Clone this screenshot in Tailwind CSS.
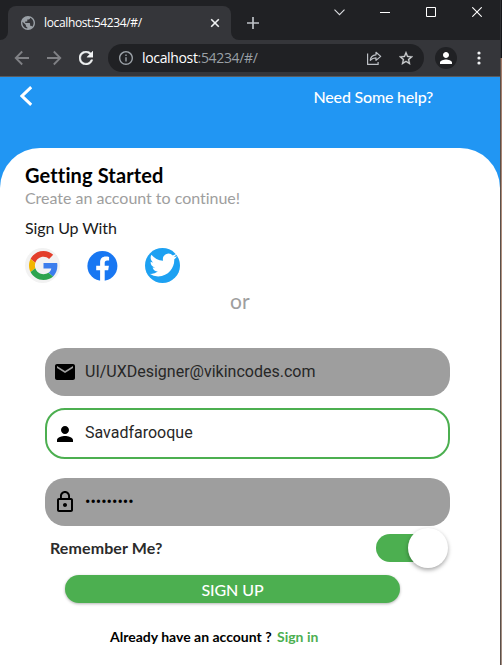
<!DOCTYPE html>
<html lang="en">
<head>
<meta charset="utf-8">
<title>Getting Started</title>
<script src="https://cdn.jsdelivr.net/npm/@tailwindcss/browser@4"></script>
</head>
<body class="w-[502px] h-[665px] overflow-hidden flex bg-[#202124] font-['Lato',sans-serif]">
<div class="w-[500px] h-[665px] shrink-0 flex flex-col">
  <!-- tab strip -->
  <div class="h-10 shrink-0 flex bg-[#202124] font-['Open_Sans',sans-serif]">
    <div class="w-2 flex items-end bg-[#35363a]"><div class="w-2 h-10 bg-[#202124] rounded-br-lg"></div></div>
    <div class="w-[223px] bg-[#202124] pt-1.5">
      <div class="h-[34px] rounded-t-lg bg-[#35363a] flex items-center pl-[13px] pr-[11px]">
        <svg class="w-[14px] h-[14px] shrink-0" viewBox="2 2 20 20" fill="#9aa0a6"><path d="M12 2C6.480 2 2 6.480 2 12s4.480 10 10 10 10-4.480 10-10S17.520 2 12 2zm-1 17.930c-3.950-.490-7-3.850-7-7.930 0-.620.080-1.210.210-1.790L9 15v1c0 1.100.9 2 2 2v1.930zm6.900-2.540c-.260-.810-1-1.390-1.900-1.390h-1v-3c0-.550-.450-1-1-1H8v-2h2c.550 0 1-.450 1-1V7h2c1.100 0 2-.9 2-2v-.410c2.930 1.190 5 4.060 5 7.410 0 2.080-.8 3.970-2.100 5.390z"/></svg>
        <span class="ml-[9px] text-[12px] leading-4 tracking-[-0.36px] text-white whitespace-nowrap">localhost:54234/#/</span>
        <svg class="w-[10px] h-[10px] ml-auto shrink-0" viewBox="0 0 10 10" stroke="#f1f3f4" stroke-width="1.600"><path d="M1.200 1.200l7.600 7.600M8.800 1.200l-7.600 7.600"/></svg>
      </div>
    </div>
    <div class="w-2 bg-[#35363a]"><div class="w-2 h-10 bg-[#202124] rounded-bl-lg"></div></div>
    <svg class="w-3 h-3 ml-2 mt-[17px]" viewBox="0 0 12 12" stroke="#bdc1c6" stroke-width="1.700"><path d="M6 0v12M0 6h12"/></svg>
    <svg class="w-[11px] h-[7px] ml-[75px] mt-[9px]" viewBox="0 0 11 7" stroke="#dadce0" stroke-width="1.100" fill="none"><path d="M.5.700l5 5 5-5"/></svg>
    <svg class="w-[10px] h-[10px] ml-[35px] mt-[7px]" viewBox="0 0 10 10"><path d="M0 5h10v1H0z" fill="#fff"/></svg>
    <svg class="w-[10px] h-[10px] ml-9 mt-[7px]" viewBox="0 0 10 10" fill="none" stroke="#fff"><path d="M.5.500h9v9h-9z"/></svg>
    <svg class="w-[10px] h-[10px] ml-9 mt-[7px]" viewBox="0 0 10 10" stroke="#fff" stroke-width="1.100"><path d="M.3.300l9.400 9.400M9.700.300L.3 9.700"/></svg>
  </div>
  <!-- toolbar -->
  <div class="h-[37px] shrink-0 flex bg-[#35363a] border-b border-[#5b5c5f] pt-1 pl-[14px] font-['Open_Sans',sans-serif]">
    <svg class="w-4 h-4 mt-1.5" viewBox="0 0 16 16" fill="none" stroke="#808185" stroke-width="1.800"><path d="M15 8H2M8.200 1.500L1.700 8l6.500 6.500"/></svg>
    <svg class="w-4 h-4 ml-4 mt-1.5" viewBox="0 0 16 16" fill="none" stroke="#808185" stroke-width="1.800"><path d="M1 8h13M7.800 1.500L14.300 8l-6.500 6.500"/></svg>
    <svg class="w-[14px] h-[14px] ml-[17px] mt-[7px]" viewBox="4 4 16 16" fill="#f1f3f4" stroke="#f1f3f4" stroke-width=".5"><path d="M17.650 6.350C16.200 4.900 14.210 4 12 4c-4.420 0-7.990 3.580-7.990 8s3.570 8 7.990 8c3.730 0 6.840-2.550 7.730-6h-2.080c-.820 2.330-3.040 4-5.650 4-3.310 0-6-2.690-6-6s2.690-6 6-6c1.660 0 3.140.690 4.220 1.780L13 11h7V4l-2.350 2.350z"/></svg>
    <div class="w-[316px] h-7 ml-[15px] rounded-full bg-[#202124] flex items-center pl-[11px] pr-[11px]">
      <svg class="w-[14px] h-[14px] shrink-0" viewBox="2 2 20 20" fill="#9aa0a6"><path d="M11 7h2v2h-2zm0 4h2v6h-2zm1-9C6.480 2 2 6.480 2 12s4.480 10 10 10 10-4.480 10-10S17.520 2 12 2zm0 18c-4.410 0-8-3.590-8-8s3.590-8 8-8 8 3.590 8 8-3.590 8-8 8z"/></svg>
      <span class="ml-[9px] text-[14px] leading-5 tracking-[-0.340px] text-[#9aa0a6] whitespace-nowrap"><span class="text-white">localhost</span>:54234/#/</span>
      <svg class="w-4 h-[14px] ml-auto shrink-0" viewBox="0 0 16 14" fill="none" stroke="#bdc1c6" stroke-width="1.200"><path d="M1.600 2.500v10.900h10.500v-2.400M4.300 9.300c.3-3.600 2.300-5.300 5.700-5.500V1.300l4.700 4.100L10 9.400V6.800c-2.500 0-4.200.7-5.700 2.500z" stroke-linejoin="round"/></svg>
      <svg class="w-[14px] h-[14px] ml-[17px] shrink-0" viewBox="2 2 20 19" fill="#d0d2d5" stroke="#d0d2d5" stroke-width=".4"><path d="M22 9.240l-7.190-.620L12 2 9.190 8.630 2 9.240l5.460 4.730L5.820 21 12 17.270 18.180 21l-1.630-7.030L22 9.240zM12 15.400l-3.760 2.270 1-4.280-3.320-2.880 4.380-.380L12 6.100l1.710 4.040 4.380.380-3.320 2.880 1 4.280L12 15.400z"/></svg>
    </div>
    <div class="w-[22px] h-[22px] ml-[11px] mt-[3px] rounded-full bg-[#202124] flex items-center justify-center">
      <svg class="w-3 h-3" viewBox="4 4 16 16" fill="#fff"><path d="M12 12c2.210 0 4-1.790 4-4s-1.790-4-4-4-4 1.790-4 4 1.790 4 4 4zm0 2c-2.670 0-8 1.340-8 4v2h16v-2c0-2.660-5.330-4-8-4z"/></svg>
    </div>
    <svg class="w-1 h-[14px] ml-[19.500px] mt-[7px]" viewBox="0 0 4 14" fill="#f1f3f4"><circle cx="2" cy="2" r="1.600"/><circle cx="2" cy="7" r="1.600"/><circle cx="2" cy="12" r="1.600"/></svg>
  </div>
  <!-- app -->
  <div class="flex-1 flex flex-col bg-[#2196f3]">
    <div class="h-[71px] shrink-0 flex justify-between pl-5 pr-[67px]">
      <svg class="w-3 h-5 mt-[9px]" viewBox="0 0 12 20" fill="none" stroke="#fff" stroke-width="3"><path d="M11.200 1.200L2 10l9.200 8.800"/></svg>
      <span class="mt-[10px] text-[16px] leading-5 tracking-[-0.200px] text-white font-medium">Need Some help?</span>
    </div>
    <div class="flex-1 bg-white rounded-t-[40px] flex flex-col">
      <h1 class="ml-[25px] mt-[15px] text-[20px] leading-6 tracking-[0.130px] font-bold text-black">Getting Started</h1>
      <p class="ml-[25px] mt-[1px] text-[16px] leading-5 tracking-[-0.020px] text-[#9e9e9e]">Create an account to continue!</p>
      <p class="ml-[25px] mt-[10px] text-[16px] leading-5 tracking-[-0.120px] text-[#1a1a1a]">Sign Up With</p>
      <div class="flex items-center ml-[25px] mt-[10px] h-[35px]">
        <div class="w-[35px] h-[35px] rounded-full bg-[#f2f2f2] flex items-center justify-end pr-[2px]">
          <svg class="w-[29px] h-[29px]" viewBox="0 0 48 48"><path fill="#e33e2b" d="M24 9.500c3.540 0 6.710 1.220 9.210 3.600l6.850-6.850C35.900 2.380 30.470 0 24 0 14.620 0 6.510 5.380 2.560 13.220l7.980 6.190C12.430 13.720 17.740 9.500 24 9.500z"/><path fill="#3b7ded" d="M46.980 24.550c0-1.570-.150-3.090-.380-4.550H24v9.020h12.940c-.580 2.960-2.260 5.480-4.780 7.180l7.730 6c4.510-4.180 7.090-10.360 7.090-17.650z"/><path fill="#f2b600" d="M10.530 28.590c-.480-1.450-.760-2.990-.760-4.590s.270-3.140.760-4.590l-7.980-6.190C.920 16.460 0 20.120 0 24s.920 7.540 2.560 10.780l7.970-6.190z"/><path fill="#2da44e" d="M24 48c6.480 0 11.930-2.130 15.890-5.810l-7.730-6c-2.150 1.450-4.920 2.300-8.160 2.300-6.260 0-11.570-4.220-13.470-9.910l-7.980 6.190C6.510 42.620 14.620 48 24 48z"/></svg>
        </div>
        <svg class="w-[31px] h-[30px] ml-[27px]" viewBox="0 0 31 30"><g transform="translate(.4)"><circle cx="15" cy="15" r="15" fill="#1877f2"/><path fill="#fff" d="M12.700 30V19.200H8.800V14.800h3.900v-3.300c0-3.800 2.200-5.900 5.700-5.900 1.200 0 2.200.1 3.300.3v3.700h-1.900c-1.900 0-2.500 1.200-2.500 2.400v2.800h4.200l-.7 4.400h-3.500V30z"/></g></svg>
        <svg class="w-[35px] h-[35px] ml-[27px]" viewBox="0 0 35 35"><circle cx="17.500" cy="17.500" r="17.500" fill="#1da1f2"/><path fill="#fff" transform="translate(4.500 3) scale(1.150 1.170)" d="M23.950 4.570a10 10 0 01-2.820.770 4.960 4.960 0 002.160-2.720c-.950.550-2 .950-3.130 1.180a4.920 4.920 0 00-8.380 4.480C7.690 8.090 4.070 6.130 1.640 3.160a4.820 4.820 0 00-.670 2.480c0 1.710.870 3.210 2.190 4.100a4.900 4.900 0 01-2.230-.620v.060a4.920 4.920 0 003.950 4.830 5 5 0 01-2.210.080 4.940 4.940 0 004.600 3.420A9.870 9.870 0 010 19.540a14 14 0 007.550 2.210c9.050 0 14-7.500 14-13.980 0-.210 0-.420-.020-.630a9.940 9.940 0 002.420-2.570z"/></svg>
      </div>
      <p class="ml-[230px] mt-[6px] text-[21px] leading-6 text-[#9e9e9e]">or</p>
      <form class="ml-[45px] mt-[35px] w-[405px] flex flex-col font-['Roboto',sans-serif] text-[16px] leading-5 text-[#272727]">
        <div class="h-12 rounded-[20px] bg-[#9e9e9e] flex items-center pl-2">
          <svg class="w-6 h-6" viewBox="0 0 24 24"><path d="M20 4H4c-1.100 0-1.990.9-1.990 2L2 18c0 1.100.9 2 2 2h16c1.100 0 2-.9 2-2V6c0-1.100-.9-2-2-2zm0 4l-8 5-8-5V6l8 5 8-5v2z"/></svg>
          <span class="ml-2">UI/UXDesigner@vikincodes.com</span>
        </div>
        <div class="h-[51px] mt-3 rounded-[20px] border-2 border-[#4caf50] flex items-center pl-1.5">
          <svg class="w-6 h-6" viewBox="0 0 24 24"><path d="M12 12c2.210 0 4-1.790 4-4s-1.790-4-4-4-4 1.790-4 4 1.790 4 4 4zm0 2c-2.670 0-8 1.340-8 4v2h16v-2c0-2.660-5.330-4-8-4z"/></svg>
          <span class="ml-2 pb-px">Savadfarooque</span>
        </div>
        <div class="h-12 mt-[19px] rounded-[20px] bg-[#9e9e9e] flex items-center pl-2">
          <svg class="w-6 h-6" viewBox="0 0 24 24"><path d="M12 17c1.100 0 2-.9 2-2s-.9-2-2-2-2 .9-2 2 .9 2 2 2zm6-9h-1V6c0-2.760-2.240-5-5-5S7 3.240 7 6v2H6c-1.100 0-2 .9-2 2v10c0 1.100.9 2 2 2h12c1.100 0 2-.9 2-2V10c0-1.100-.9-2-2-2zM8.900 6c0-1.710 1.390-3.100 3.100-3.100s3.100 1.390 3.100 3.100v2H8.900V6zM18 20H6V10h12v10z"/></svg>
          <span class="ml-2 text-black">•••••••••</span>
        </div>
      </form>
      <div class="flex justify-between h-[45px] pl-[50px] pr-[51.600px] pt-[2px]">
        <span class="mt-[10px] text-[16px] leading-5 font-bold tracking-[0.100px] text-[#2b2b2b]">Remember Me?</span>
        <div class="w-[72px] h-10 flex items-center">
          <div class="w-[70px] h-7 rounded-full bg-[#4caf50] flex items-center justify-end">
            <div class="w-10 h-10 shrink-0 -mr-[1.500px] rounded-full bg-white shadow-[0_2px_4px_rgba(0,0,0,0.35)]"></div>
          </div>
        </div>
      </div>
      <button type="button" class="ml-[65px] mt-[4px] w-[335px] h-7 shrink-0 rounded-[14px] bg-[#4caf50] text-white text-[16px] leading-5 pt-0.5 font-medium tracking-[-0.080px] shadow-[0_1px_3px_rgba(0,0,0,0.3)]">SIGN UP</button>
      <div class="ml-[110px] mt-[25px] flex gap-[5px] text-[14px] leading-[18px] font-bold text-black whitespace-nowrap"><span class="w-[162px]">Already have an account ?</span><a class="text-[#4caf50]">Sign in</a></div>
    </div>
  </div>
</div>
<!-- desktop strip beside the window -->
<div class="w-[2px] shrink-0 flex flex-col">
  <div class="h-[58px] bg-[#17171a] border-l border-[#303134]"></div>
  <div class="flex-1 border-l border-[#5a4f49] bg-linear-to-b from-[#a47b68] via-[#b59c8c] to-[#a18c80]"></div>
</div>
</body>
</html>
